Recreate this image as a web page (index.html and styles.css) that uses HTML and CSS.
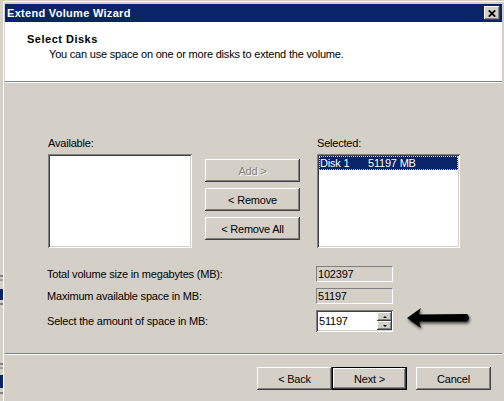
FILE: index.html
```html
<!DOCTYPE html>
<html>
<head>
<meta charset="utf-8">
<title>Extend Volume Wizard</title>
<link rel="stylesheet" href="styles.css">
</head>
<body>
<div class="screen">
  <div class="strip"></div>
  <div class="window">
    <div class="titlebar">
      <span class="title">Extend Volume Wizard</span>
      <span class="close"><svg width="8" height="7" viewBox="0 0 8 7"><path d="M0.8 0.3 L7.2 6.7 M7.2 0.3 L0.8 6.7" stroke="#000" stroke-width="1.7" fill="none"/></svg></span>
    </div>
    <div class="header">
      <div class="h-title">Select Disks</div>
      <div class="h-sub">You can use space on one or more disks to extend the volume.</div>
    </div>
    <div class="body">
      <div class="lists">
        <div class="col">
          <div class="lbl">Available:</div>
          <div class="listbox avail"></div>
        </div>
        <div class="btncol">
          <button class="btn wide disabled">Add &gt;</button>
          <button class="btn wide">&lt; Remove</button>
          <button class="btn wide">&lt; Remove All</button>
        </div>
        <div class="col">
          <div class="lbl">Selected:</div>
          <div class="listbox sel">
            <div class="item"><span class="item-name">Disk 1</span><span>51197 MB</span></div>
          </div>
        </div>
      </div>
      <div class="fields">
        <div class="frow"><span class="flabel">Total volume size in megabytes (MB):</span><span class="ro">102397</span></div>
        <div class="frow"><span class="flabel">Maximum available space in MB:</span><span class="ro">51197</span></div>
        <div class="frow"><span class="flabel">Select the amount of space in MB:</span>
          <span class="spin"><span class="spin-val">51197</span><span class="spin-btns"><span class="sb up"></span><span class="sb down"></span></span></span>
        </div>
      </div>
    </div>
    <div class="footer">
      <button class="btn">&lt; Back</button>
      <button class="btn default">Next &gt;</button>
      <button class="btn cancel">Cancel</button>
    </div>
  </div>
  <svg class="arrow" width="80" height="34" viewBox="0 0 80 34">
    <defs>
      <filter id="sh" x="-20%" y="-40%" width="140%" height="180%">
        <feGaussianBlur in="SourceAlpha" stdDeviation="1.6"/>
        <feOffset dx="1" dy="1.5" result="b"/>
        <feComponentTransfer><feFuncA type="linear" slope="0.7"/></feComponentTransfer>
        <feMerge><feMergeNode/><feMergeNode in="SourceGraphic"/></feMerge>
      </filter>
    </defs>
    <path d="M7 16 L21 6 Q19 10.5 19.5 12.5 L67 12 Q71 15.5 67 19.5 L19.5 19.5 Q19 21.5 21 26 Z" fill="#000" filter="url(#sh)"/>
  </svg>
</div>
</body>
</html>
```

FILE: styles.css
```css
body {
  margin: 0;
  background: #d4d0c8;
  font-family: "Liberation Sans", Arial, sans-serif;
  font-size: 11px;
  letter-spacing: -0.2px;
  color: #000;
}

.screen {
  position: relative;
  width: 504px;
  height: 401px;
  box-sizing: border-box;
  padding-top: 1px;
  display: flex;
  overflow: hidden;
  background: #d4d0c8;
}

.strip {
  width: 3px;
  flex: none;
  margin-top: -1px;
  background: linear-gradient(to bottom,
    #d4d0c8 0 275px, #808080 275px 277px, #d4d0c8 277px 279px,
    #a0a0a0 279px 281px, #d4d0c8 281px 289px, #0a246a 289px 300px,
    #d4d0c8 300px 303px, #808080 303px 305px, #d4d0c8 305px 363px,
    #808080 363px 365px, #d4d0c8 365px 367px, #a0a0a0 367px 369px,
    #d4d0c8 369px 375px, #0a246a 375px 388px, #d4d0c8 388px 392px,
    #808080 392px 394px, #d4d0c8 394px);
}

.window {
  flex: 1;
  display: flex;
  flex-direction: column;
  border-top: 1px solid #fff;
  border-left: 1px solid #fff;
  padding: 2px 2px 0 1px;
}

.titlebar {
  height: 18px;
  flex: none;
  background: #0a246a;
  display: flex;
  align-items: center;
  justify-content: space-between;
  padding: 0 2px;
  color: #fff;
}

.title {
  font-weight: bold;
  letter-spacing: 0.3px;
}

.close {
  width: 16px;
  height: 14px;
  background: #d4d0c8;
  box-shadow: inset -1px -1px #404040, inset 1px 1px #fff, inset -2px -2px #808080;
  display: flex;
  align-items: center;
  justify-content: center;
}

.close svg {
  display: block;
  margin-left: -1px;
}

.header {
  height: 60px;
  flex: none;
  box-sizing: border-box;
  background: #fff;
  border-bottom: 1px solid #808080;
  padding: 10px 0 0 22px;
}

.h-title {
  font-weight: bold;
  line-height: 14px;
  letter-spacing: 0.5px;
}

.h-sub {
  margin: 1px 0 0 22px;
  line-height: 14px;
}

.body {
  flex: 1;
  border-top: 1px solid #fff;
  padding: 53px 0 0 43px;
}

.lists {
  display: flex;
  align-items: flex-start;
}

.col {
  display: flex;
  flex-direction: column;
  gap: 4px;
}

.lbl {
  line-height: 14px;
}

.listbox {
  height: 94px;
  box-sizing: border-box;
  background: #fff;
  padding: 2px;
  box-shadow: inset 1px 1px #808080, inset -1px -1px #fff, inset 2px 2px #404040, inset -2px -2px #d4d0c8;
}

.listbox.avail { width: 144px; }
.listbox.sel { width: 143px; }

.item {
  height: 14px;
  box-sizing: border-box;
  background: #0a246a;
  color: #fff;
  border: 1px dotted #e8cf6a;
  display: flex;
  align-items: center;
  line-height: 12px;
}

.item-name {
  width: 48px;
}

.btncol {
  display: flex;
  flex-direction: column;
  gap: 6px;
  margin: 23px 17px 0 13px;
}

.btn {
  width: 75px;
  height: 23px;
  padding: 0;
  border: none;
  background: #d4d0c8;
  font: inherit;
  letter-spacing: inherit;
  color: #000;
  box-shadow: inset -1px -1px #404040, inset 1px 1px #fff, inset -2px -2px #808080, inset 2px 2px #d4d0c8;
}

.btn.wide { width: 95px; }

.btn.disabled {
  color: #808080;
  text-shadow: 1px 1px #fff;
}

.btn.default {
  box-shadow: inset 0 0 0 1px #000, inset -2px -2px #404040, inset 2px 2px #fff, inset -3px -3px #808080;
}

.btn.cancel { margin-left: 9px; }

.fields {
  margin: 18px 0 0 -1px;
  display: flex;
  flex-direction: column;
  gap: 6px;
}

.frow {
  display: flex;
  align-items: center;
}

.flabel {
  width: 269px;
  line-height: 14px;
}

.ro {
  width: 77px;
  height: 16px;
  box-sizing: border-box;
  border: 1px solid;
  border-color: #808080 #fff #fff #808080;
  padding-left: 1px;
  line-height: 14px;
}

.spin {
  width: 77px;
  height: 22px;
  box-sizing: border-box;
  background: #fff;
  padding: 2px 1px 2px 2px;
  display: flex;
  box-shadow: inset 1px 1px #808080, inset -1px -1px #fff, inset 2px 2px #404040, inset -2px -2px #d4d0c8;
}

.spin-val {
  flex: 1;
  padding-left: 1px;
  line-height: 18px;
}

.spin-btns {
  width: 15px;
  display: flex;
  flex-direction: column;
}

.sb {
  flex: 1;
  background: #d4d0c8;
  box-shadow: inset -1px -1px #404040, inset 1px 1px #fff, inset -2px -2px #808080;
  display: flex;
  align-items: center;
  justify-content: center;
}

.sb::before {
  content: "";
  width: 0;
  height: 0;
  border-left: 2px solid transparent;
  border-right: 2px solid transparent;
}

.sb.up::before { border-bottom: 2px solid #000; }
.sb.down::before { border-top: 2px solid #000; }

.footer {
  height: 48px;
  flex: none;
  box-sizing: border-box;
  border-top: 1px solid #808080;
  box-shadow: inset 0 1px #fff;
  padding: 13px 11px 0 0;
  display: flex;
  justify-content: flex-end;
  align-items: flex-start;
}

.arrow {
  position: absolute;
  left: 400px;
  top: 302px;
}
```
